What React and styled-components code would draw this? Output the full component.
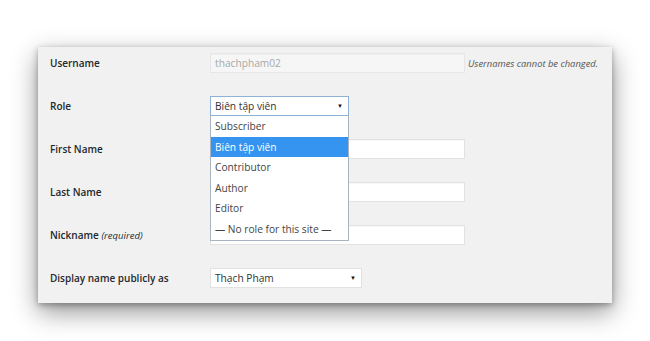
import React from "react";
import styled, { createGlobalStyle } from "styled-components";

const Global = createGlobalStyle`
  html, body { margin: 0; padding: 0; background: #fff; }
  body { font-family: "Open Sans", "Noto Sans", sans-serif; }
`;

const Page = styled.div`
  width: 650px;
  height: 341px;
  padding: 47px 38px 0 38px;
  box-sizing: border-box;
  overflow: hidden;
`;

const Panel = styled.div`
  width: 574px;
  height: 256px;
  box-sizing: border-box;
  background: #f1f1f1;
  padding: 6px 0 0 12px;
  box-shadow: 0 9px 24px rgba(0, 0, 0, 0.42), 0 2px 6px rgba(0, 0, 0, 0.3);
  display: flex;
  flex-direction: column;
  gap: 23px;
`;

const Row = styled.div`
  display: flex;
  align-items: center;
  height: 20px;
`;

const Label = styled.div`
  width: 160px;
  flex: none;
  font-size: 10px;
  font-weight: 600;
  color: #23282d;
  margin-top: -1px;
`;

const Req = styled.span`
  font-style: italic;
  font-weight: 400;
  font-size: 9.5px;
`;

const Field = styled.div`
  width: ${(p) => p.$w}px;
  height: 20px;
  box-sizing: border-box;
  background: ${(p) => (p.$disabled ? "#f6f6f6" : "#fff")};
  border: 1px solid ${(p) => (p.$disabled ? "#e6e6e6" : "#e2e2e2")};
  font-size: 10.2px;
  color: ${(p) => (p.$disabled ? "#a8a8a8" : "#333")};
  padding: 0 4px;
  display: flex;
  align-items: center;
  justify-content: space-between;
  box-shadow: inset 0 1px 1px rgba(0,0,0,0.03);
`;

const Hint = styled.span`
  font-size: 9.4px;
  font-style: italic;
  color: #555;
  margin-left: 3px;
`;

const SelectWrap = styled.div`
  position: relative;
`;

const Select = styled.div`
  width: ${(p) => p.$w}px;
  height: 20px;
  box-sizing: border-box;
  background: #fff;
  border: 1px solid ${(p) => (p.$focus ? "#8db2d6" : "#e2e2e2")};
  font-size: 10.2px;
  color: #333;
  padding: 0 5px 0 4px;
  display: flex;
  align-items: center;
  justify-content: space-between;
`;

const Arrow = styled.span`
  font-size: 6px;
  color: #111;
`;

const Menu = styled.ul`
  position: absolute;
  top: 20px;
  left: 0;
  width: 139px;
  box-sizing: border-box;
  margin: 0;
  padding: 0 0 1px;
  list-style: none;
  background: #fff;
  border: 1px solid #a9b4c2;
  border-top: none;
  z-index: 2;
`;

const Option = styled.li`
  height: 20.5px;
  line-height: 20px;
  padding: 0 4px;
  font-size: 10.2px;
  color: ${(p) => (p.$active ? "#fff" : "#444")};
  background: ${(p) => (p.$active ? "#3594f0" : "transparent")};
`;

const options = [
  "Subscriber",
  "Biên tập viên",
  "Contributor",
  "Author",
  "Editor",
  "— No role for this site —",
];

export default function App() {
  return (
    <>
      <Global />
      <Page>
        <Panel>
          <Row>
            <Label>Username</Label>
            <Field $w={255} $disabled>thachpham02</Field>
            <Hint>Usernames cannot be changed.</Hint>
          </Row>
          <Row>
            <Label>Role</Label>
            <SelectWrap>
              <Select $w={139} $focus>
                <span>Biên tập viên</span>
                <Arrow>▼</Arrow>
              </Select>
              <Menu>
                {options.map((o, i) => (
                  <Option key={o} $active={i === 1}>{o}</Option>
                ))}
              </Menu>
            </SelectWrap>
          </Row>
          <Row>
            <Label>First Name</Label>
            <Field $w={255} />
          </Row>
          <Row>
            <Label>Last Name</Label>
            <Field $w={255} />
          </Row>
          <Row>
            <Label>
              Nickname <Req>(required)</Req>
            </Label>
            <Field $w={255} />
          </Row>
          <Row>
            <Label>Display name publicly as</Label>
            <Select $w={152}>
              <span>Thạch Phạm</span>
              <Arrow>▼</Arrow>
            </Select>
          </Row>
        </Panel>
      </Page>
    </>
  );
}
